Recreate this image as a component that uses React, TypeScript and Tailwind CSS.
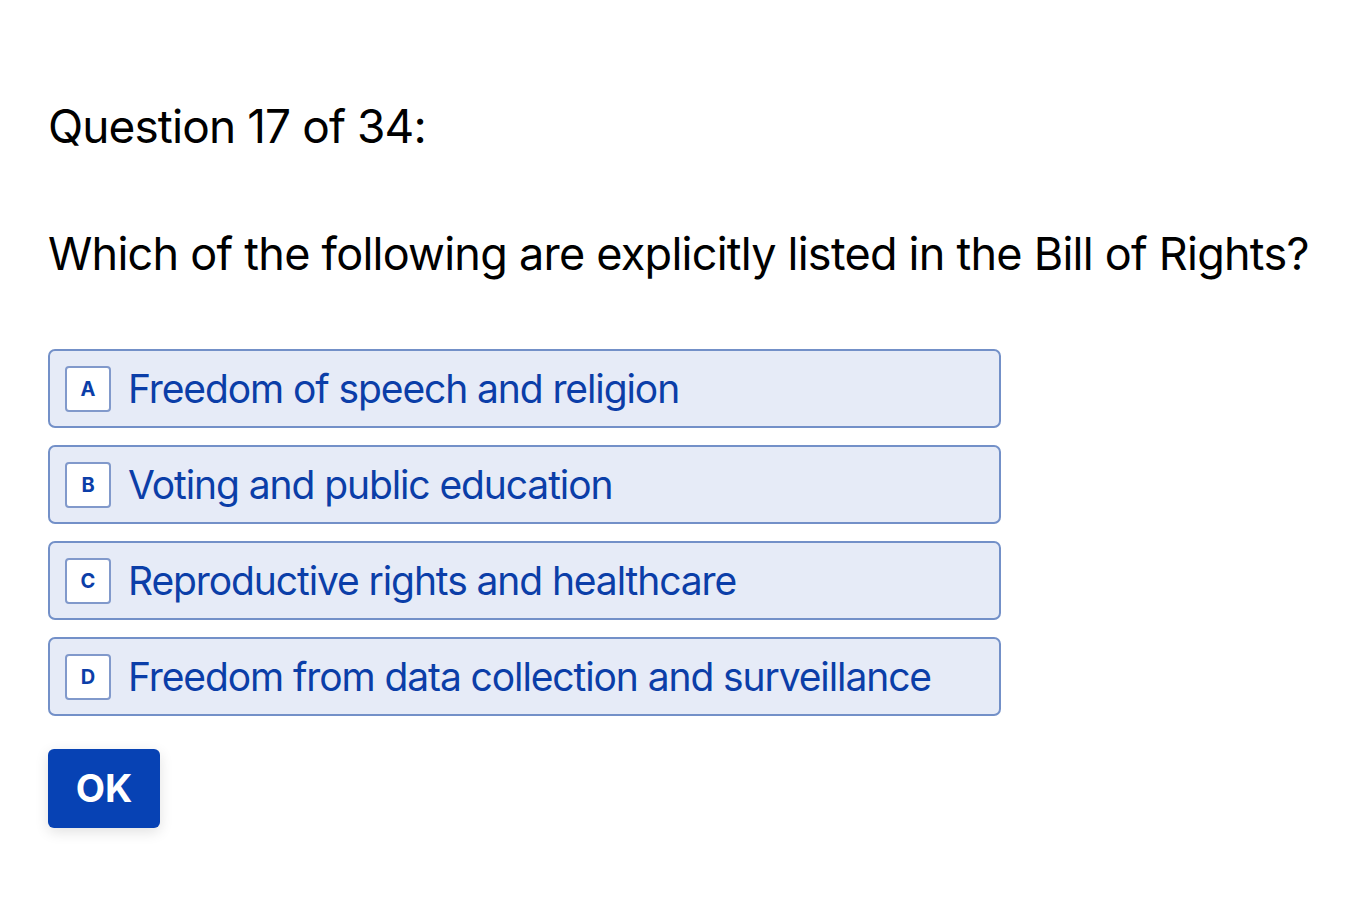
import React from 'react'

const options = [
    { key: 'A', label: 'Freedom of speech and religion' },
    { key: 'B', label: 'Voting and public education' },
    { key: 'C', label: 'Reproductive rights and healthcare' },
    { key: 'D', label: 'Freedom from data collection and surveillance' },
]

const App = () => {
    return (
        <main className="w-full min-h-screen bg-white pl-12 pt-[98px] font-['Inter',sans-serif]">
            <h1 className="text-[46px] leading-[56px] text-black tracking-[-0.9px]">Question 17 of 34:</h1>
            <p className="mt-[72px] text-[45px] leading-[56px] text-black tracking-[-0.75px] whitespace-nowrap">
                Which of the following are explicitly listed in the Bill of Rights?
            </p>
            <div className="mt-[67px] flex flex-col gap-[17px] w-[953px]">
                {options.map((o) => (
                    <button
                        key={o.key}
                        className="flex items-center h-[79px] px-[15px] gap-[17px] rounded-[7px] border-2 border-[#7390c8] bg-[#e6ebf7] text-left"
                    >
                        <span className="flex items-center justify-center w-[46px] h-[46px] shrink-0 rounded-[4px] border-2 border-[#8199cb] bg-white text-[20px] font-bold text-[#0b3ea8]">
                            {o.key}
                        </span>
                        <span className="text-[39px] leading-none text-[#0b3ea8] tracking-[-1.1px] whitespace-nowrap">{o.label}</span>
                    </button>
                ))}
            </div>
            <button className="mt-[33px] w-[112px] h-[79px] rounded-[6px] bg-[#0742b4] text-white text-[38px] font-bold shadow-[0_4px_14px_rgba(0,0,0,0.12)]">
                OK
            </button>
        </main>
    )
}

export default App
